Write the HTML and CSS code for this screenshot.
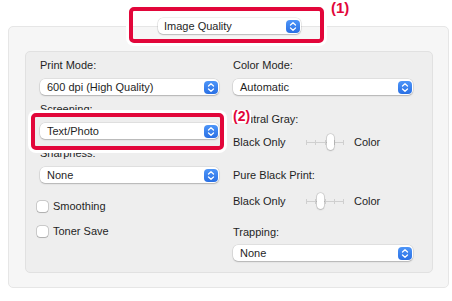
FILE: index.html
```html
<!DOCTYPE html>
<html lang="en">
<head>
    <meta charset="UTF-8">
    <meta name="viewport" content="width=device-width, initial-scale=1.0">
    <title>Image Quality</title>
    <link rel="stylesheet" href="styles.css">
</head>
<body>
    <!-- Panel selector -->
    <div class="head">
        <div class="popup popup-top">
            <span>Image Quality</span>
            <span class="stepper"><svg width="14" height="13" viewBox="0 0 14 13"><path d="M4.5 5 L7 2.8 L9.5 5 M4.5 8 L7 10.2 L9.5 8" fill="none" stroke="#fff" stroke-width="1.3" stroke-linecap="round" stroke-linejoin="round"/></svg></span>
        </div>
    </div>

    <div class="outer">
        <div class="inner">
            <div class="col">
                <div class="label">Print Mode:</div>
                <div class="popup">
                    <span>600 dpi (High Quality)</span>
                    <span class="stepper"><svg width="14" height="13" viewBox="0 0 14 13"><path d="M4.5 5 L7 2.8 L9.5 5 M4.5 8 L7 10.2 L9.5 8" fill="none" stroke="#fff" stroke-width="1.3" stroke-linecap="round" stroke-linejoin="round"/></svg></span>
                </div>

                <div class="label gap8">Screening:</div>
                <div class="popup">
                    <span>Text/Photo</span>
                    <span class="stepper"><svg width="14" height="13" viewBox="0 0 14 13"><path d="M4.5 5 L7 2.8 L9.5 5 M4.5 8 L7 10.2 L9.5 8" fill="none" stroke="#fff" stroke-width="1.3" stroke-linecap="round" stroke-linejoin="round"/></svg></span>
                </div>

                <div class="label gap8">Sharpness:</div>
                <div class="popup">
                    <span>None</span>
                    <span class="stepper"><svg width="14" height="13" viewBox="0 0 14 13"><path d="M4.5 5 L7 2.8 L9.5 5 M4.5 8 L7 10.2 L9.5 8" fill="none" stroke="#fff" stroke-width="1.3" stroke-linecap="round" stroke-linejoin="round"/></svg></span>
                </div>

                <div class="check first"><span class="box"></span>Smoothing</div>
                <div class="check second"><span class="box"></span>Toner Save</div>
            </div>

            <div class="col">
                <div class="label">Color Mode:</div>
                <div class="popup">
                    <span>Automatic</span>
                    <span class="stepper"><svg width="14" height="13" viewBox="0 0 14 13"><path d="M4.5 5 L7 2.8 L9.5 5 M4.5 8 L7 10.2 L9.5 8" fill="none" stroke="#fff" stroke-width="1.3" stroke-linecap="round" stroke-linejoin="round"/></svg></span>
                </div>

                <div class="label neutral">Neutral Gray:</div>
                <div class="range r1">
                    <span class="rlabel">Black Only</span>
                    <span class="slider">
                        <i style="left:0"></i><i style="left:9px"></i><i style="left:19px"></i><i style="left:28px"></i><i style="left:37px"></i>
                        <b class="knob" style="left:21px"></b>
                    </span>
                    <span class="rend">Color</span>
                </div>

                <div class="label pure">Pure Black Print:</div>
                <div class="range r2">
                    <span class="rlabel">Black Only</span>
                    <span class="slider">
                        <i style="left:0"></i><i style="left:9px"></i><i style="left:19px"></i><i style="left:28px"></i><i style="left:37px"></i>
                        <b class="knob" style="left:11px"></b>
                    </span>
                    <span class="rend">Color</span>
                </div>

                <div class="label trap">Trapping:</div>
                <div class="popup trap-popup">
                    <span>None</span>
                    <span class="stepper"><svg width="14" height="13" viewBox="0 0 14 13"><path d="M4.5 5 L7 2.8 L9.5 5 M4.5 8 L7 10.2 L9.5 8" fill="none" stroke="#fff" stroke-width="1.3" stroke-linecap="round" stroke-linejoin="round"/></svg></span>
                </div>
            </div>
        </div>
    </div>

    <!-- Anotaciones -->
    <div class="mark mark1"></div>
    <div class="num num1">(1)</div>
    <div class="mark mark2"></div>
    <div class="num num2">(2)</div>
</body>
</html>
```

FILE: styles.css
```css
body {
    margin: 0;
    background-color: #fff;
    font-family: 'Liberation Sans', Arial, sans-serif;
    font-size: 11px;
    color: #1f1f1f;
    position: relative;
}

.head {
    position: relative;
    z-index: 1;
    padding: 18px 0 0 158px;
    height: 16px;
    margin-bottom: -8px;
}

.outer {
    margin: 0 3px 0 8px;
    background-color: #f6f6f6;
    border: 1px solid #e6e6e6;
    border-radius: 5px;
    padding: 24px 15px 14px 16px;
}

.inner {
    display: grid;
    grid-template-columns: 179px 180px;
    column-gap: 14px;
    background-color: #eeeeee;
    border: 1px solid #e1e1e1;
    border-radius: 5px;
    padding: 7px 19px 11px 14px;
}

.col {
    display: flex;
    flex-direction: column;
}

.label {
    line-height: 13px;
    height: 13px;
}
.gap8 { margin-top: 8px; }
.neutral { margin-top: 18px; }
.pure { margin-top: 19px; }
.trap { margin-top: 17px; }

/* Menus desplegables */
.popup {
    display: flex;
    align-items: center;
    justify-content: space-between;
    height: 16px;
    margin-top: 7px;
    padding: 0 1px 0 7px;
    background-color: #fff;
    border-radius: 5px;
    box-shadow: 0 0 0 0.5px rgba(0,0,0,0.12), 0 1px 1.5px rgba(0,0,0,0.2);
    line-height: 13px;
}
.popup-top {
    width: 136px;
    margin-top: 0;
    padding-left: 6px;
}
.trap-popup { margin-top: 6px; }

.stepper {
    display: block;
    width: 14px;
    height: 13px;
    border-radius: 4px;
    background: linear-gradient(#4d95f8, #2a70e4);
}
.stepper svg { display: block; }

/* Casillas */
.check {
    display: flex;
    align-items: center;
    gap: 5px;
    height: 11px;
    margin-left: -3px;
    line-height: 13px;
}
.check.first { margin-top: 18px; }
.check.second { margin-top: 14px; }
.box {
    width: 11px;
    height: 11px;
    background-color: #fff;
    border-radius: 3px;
    box-shadow: 0 0 0 0.5px rgba(0,0,0,0.28), 0 0.5px 1px rgba(0,0,0,0.15);
}

/* Deslizadores */
.range {
    display: flex;
    align-items: center;
    height: 16px;
    line-height: 13px;
}
.range.r1 { margin-top: 8px; }
.range.r2 { margin-top: 11px; }
.rlabel { width: 73px; }
.rend { margin-left: 10px; }
.slider {
    position: relative;
    width: 38px;
    height: 16px;
}
.slider::before {
    content: "";
    position: absolute;
    left: 0;
    right: 0;
    top: 7.5px;
    height: 1px;
    background-color: #cfcfcf;
}
.slider i {
    position: absolute;
    top: 5.5px;
    width: 1px;
    height: 5px;
    background-color: #cfcfcf;
}
.knob {
    position: absolute;
    top: 0;
    width: 7px;
    height: 16px;
    border-radius: 4px;
    background-color: #fff;
    box-shadow: 0 0 0 0.5px rgba(0,0,0,0.15), 0 0.5px 1.5px rgba(0,0,0,0.3);
}

/* Marcas rojas */
.mark {
    position: absolute;
    border: 4px solid #e2063a;
    border-radius: 5px;
    box-shadow: 0 0 0 3px #fff;
    box-sizing: border-box;
    z-index: 2;
}
.mark1 { left: 129px; top: 7px; width: 195px; height: 36px; }
.mark2 { left: 31px; top: 113px; width: 193px; height: 37px; }

.num {
    position: absolute;
    z-index: 2;
    font-weight: bold;
    color: #e2063a;
}
.num1 { left: 331px; top: 0; font-size: 15px; line-height: 15px; }
.num2 {
    left: 232px;
    top: 110px;
    font-size: 14px;
    line-height: 13px;
    padding: 0 1px;
    background-color: #fff;
}
```
